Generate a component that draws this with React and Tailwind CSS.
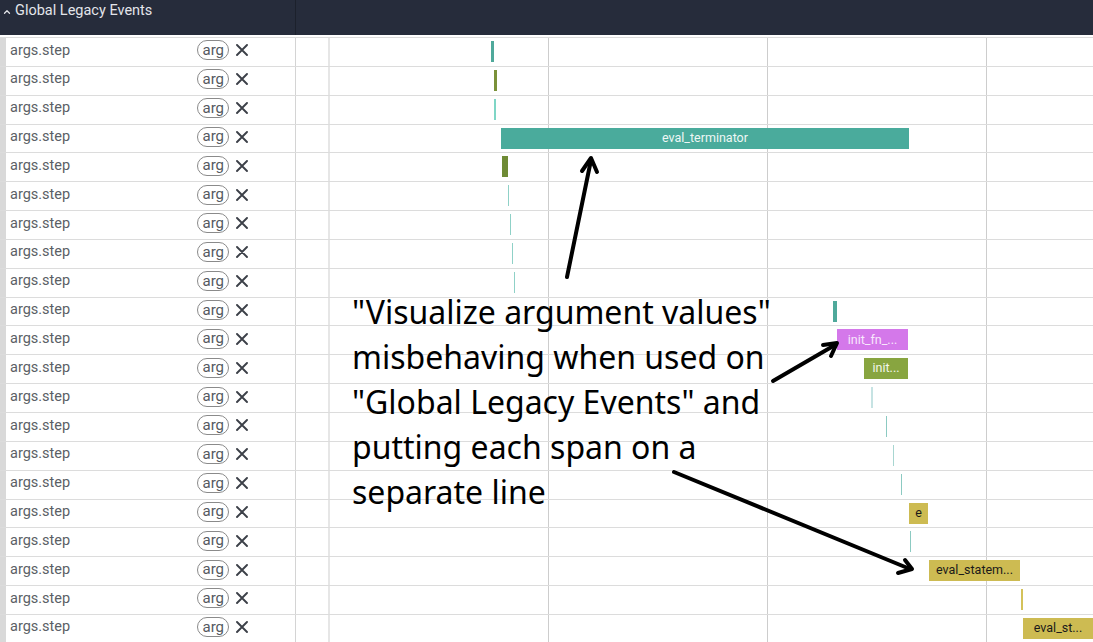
import { ChevronUp } from "lucide-react";

const ROWS = 21;

// spans placed on the timeline canvas (x in page pixels)
const spans = [
  { row: 0, left: 491, width: 3, color: "bg-[#4fa99b]" },
  { row: 1, left: 494, width: 3, color: "bg-[#7a9139]" },
  { row: 2, left: 494, width: 2, color: "bg-[#7fd6c6]" },
  { row: 3, left: 501, width: 408, color: "bg-[#4aab9c]", label: "eval_terminator", text: "text-[#eef7f5]" },
  { row: 4, left: 502, width: 6, color: "bg-[#6f8b35]" },
  { row: 5, left: 508, width: 1, color: "bg-[#8fd1c7]" },
  { row: 6, left: 510, width: 1, color: "bg-[#8fd1c7]" },
  { row: 7, left: 512, width: 1, color: "bg-[#8fd1c7]" },
  { row: 8, left: 514, width: 1, color: "bg-[#8fd1c7]" },
  { row: 9, left: 833, width: 4, color: "bg-[#4fa99b]" },
  { row: 10, left: 837, width: 71, color: "bg-[#d478ea]", label: "init_fn_...", text: "text-[#f8e8fc]" },
  { row: 11, left: 864, width: 44, color: "bg-[#88a540]", label: "init...", text: "text-[#f3f6ea]" },
  { row: 12, left: 871, width: 2, color: "bg-[#c6e3e3]" },
  { row: 13, left: 886, width: 1, color: "bg-[#8ccac2]" },
  { row: 14, left: 893, width: 1, color: "bg-[#a8d6d1]" },
  { row: 15, left: 901, width: 1, color: "bg-[#8ccac2]" },
  { row: 16, left: 909, width: 19, color: "bg-[#cdbb52]", label: "e", text: "text-[#1a1a1a]" },
  { row: 17, left: 910, width: 1, color: "bg-[#8ccac2]" },
  { row: 18, left: 929, width: 91, color: "bg-[#cdbb52]", label: "eval_statem...", text: "text-[#1a1a1a]" },
  { row: 19, left: 1021, width: 2, color: "bg-[#d4c25a]" },
  { row: 20, left: 1023, width: 70, color: "bg-[#cdbb52]", label: "eval_st...", text: "text-[#1a1a1a]" },
];

const CloseIcon = () => (
  <svg width="12" height="12" viewBox="0 0 12 12" className="shrink-0">
    <path d="M1 1 L11 11 M11 1 L1 11" stroke="#3c4048" strokeWidth="1.9" strokeLinecap="round" />
  </svg>
);

const Row = ({ index }) => {
  const rowSpans = spans.filter((s) => s.row === index);
  return (
    <div className="relative flex h-[28.85px] border-b border-[#dcdcdc]">
      <div className="w-[6px] bg-[#d9d9d9] shrink-0" />
      {/* name cell */}
      <div className="w-[290px] shrink-0 flex items-center border-r border-[#d4d4d4] pl-[4px] pr-[47px] pb-[3px]">
        <span className="flex-1 text-[14.5px] text-[#5b5f66]">args.step</span>
        <span className="h-[20px] flex items-center rounded-full border border-[#8a8a8a] px-[4px] text-[15px] leading-none text-[#55595f]">
          arg
        </span>
        <span className="ml-[7px] flex items-center">
          <CloseIcon />
        </span>
      </div>
      <div className="w-[34px] shrink-0 border-r-2 border-[#e6e6e6]" />
      <div className="flex-1" />

      {rowSpans.map((s, i) => (
        <div
          key={i}
          className={`absolute top-[3px] h-[21px] ${s.color} flex items-center justify-center overflow-hidden`}
          style={{ left: s.left, width: s.width }}
        >
          {s.label && (
            <span className={`text-[12.5px] whitespace-nowrap ${s.text}`}>{s.label}</span>
          )}
        </div>
      ))}
    </div>
  );
};

export default function App() {
  return (
    <div
      className="relative w-[1093px] h-[642px] overflow-hidden bg-white"
      style={{ fontFamily: "Roboto, 'Liberation Sans', sans-serif" }}
    >
      {/* Header */}
      <div className="flex h-[35px] bg-[#262c3b]">
        <div className="w-[296px] shrink-0 border-r border-[#1c212c] flex items-start pt-[1px] pl-[2px]">
          <ChevronUp size={10} strokeWidth={3} className="text-[#e3e5ea] mt-[6px]" />
          <span className="ml-[3px] text-[14.5px] text-[#e3e5ea] leading-[20px]">Global Legacy Events</span>
        </div>
        <div className="flex-1" />
      </div>

      {/* Rows */}
      <div className="relative mt-[2px] border-t border-[#dcdcdc]">
        {/* timeline grid lines */}
        <div className="absolute top-0 bottom-0 left-[548px] w-px bg-[#cdcdcd]" />
        <div className="absolute top-0 bottom-0 left-[767px] w-px bg-[#cdcdcd]" />
        <div className="absolute top-0 bottom-0 left-[986px] w-px bg-[#cdcdcd]" />
        {Array.from({ length: ROWS }).map((_, i) => (
          <Row key={i} index={i} />
        ))}
      </div>

      {/* Annotation */}
      <div
        className="absolute left-[352px] top-[289px] text-[32px] leading-[45px] text-black whitespace-nowrap"
        style={{ fontFamily: "'Noto Sans', 'Open Sans', sans-serif" }}
      >
        <div>"Visualize argument values"</div>
        <div>misbehaving when used on</div>
        <div>"Global Legacy Events" and</div>
        <div>putting each span on a</div>
        <div>separate line</div>
      </div>

      <svg className="absolute inset-0 pointer-events-none" width="1093" height="642">
        <g stroke="black" strokeWidth="4" fill="none" strokeLinecap="round" strokeLinejoin="round">
          <path d="M567 277 L591 160" />
          <path d="M582 171 L591 158 L597 172" />
          <path d="M773 381 L835 345" />
          <path d="M823 345 L837 343 L831 356" />
          <path d="M674 472 L910 569" />
          <path d="M898 573 L912 569 L905 560" />
        </g>
      </svg>
    </div>
  );
}
